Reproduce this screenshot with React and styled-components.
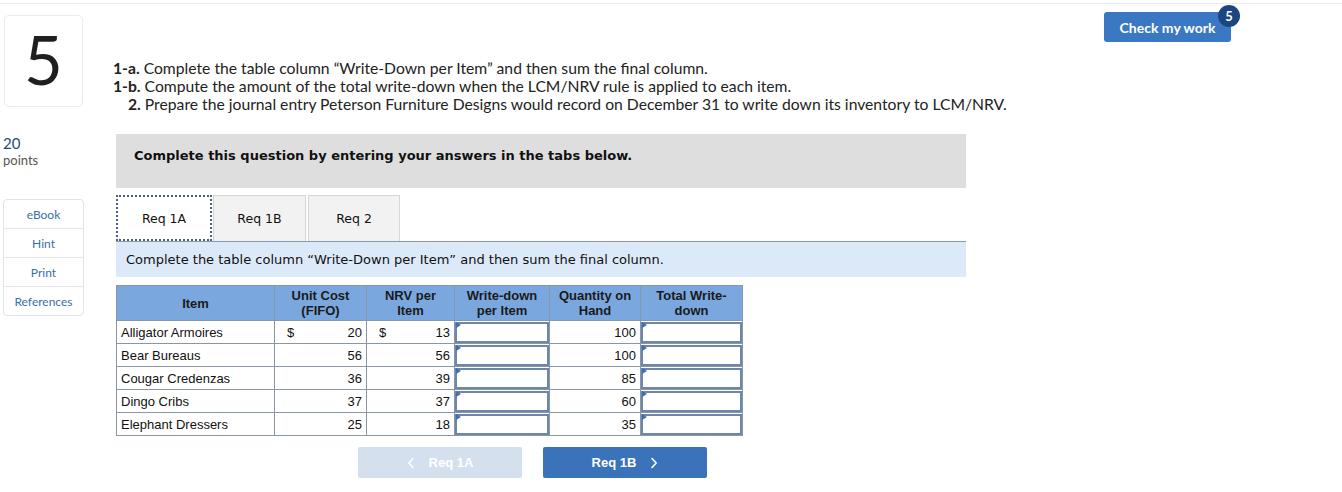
import React from "react";
import styled, { createGlobalStyle } from "styled-components";

const Global = createGlobalStyle`
  html, body { margin: 0; padding: 0; background: #fff; }
  body { font-family: Lato, "Open Sans", sans-serif; color: #222; }
`;

const Page = styled.div`
  border-top: 1px solid #ececec;
  margin-top: 3px;
  display: grid;
  grid-template-columns: 81px 1fr auto;
  column-gap: 29px;
  padding: 0 111px 0 3px;
  min-height: 480px;
  box-sizing: border-box;
`;

const LeftCol = styled.div`
  display: flex;
  flex-direction: column;
`;

const NumberBox = styled.div`
  margin: 11px 0 0 1px;
  width: 79px;
  height: 92px;
  box-sizing: border-box;
  border: 1px solid #ebebeb;
  border-radius: 5px;
  display: flex;
  align-items: center;
  justify-content: center;
  font-size: 67px;
  font-weight: 400;
  color: #1f1f1f;
  line-height: 1;
  padding-bottom: 4px;
`;

const Points = styled.div`
  margin-top: 28px;
  display: flex;
  flex-direction: column;
`;

const PointsValue = styled.span`
  font-size: 15px;
  color: #1d4b80;
  line-height: 17px;
`;

const PointsLabel = styled.span`
  font-size: 13px;
  color: #555;
  line-height: 17px;
`;

const SideMenu = styled.div`
  margin-top: 30px;
  border: 1px solid #e3e3e3;
  border-radius: 4px;
  display: flex;
  flex-direction: column;
`;

const SideItem = styled.div`
  height: 28px;
  display: flex;
  align-items: center;
  justify-content: center;
  font-size: 12px;
  color: #3b6ea8;
  & + & { border-top: 1px solid #e6e6e6; }
`;

const Main = styled.div`
  display: flex;
  flex-direction: column;
`;

const Prompt = styled.div`
  margin-top: 55px;
  font-size: 15.7px;
  line-height: 18px;
  color: #222;
`;

const PromptLine = styled.div`
  padding-left: ${(p) => p.$indent || 0}px;
  b { font-weight: 700; }
`;

const Notice = styled.div`
  margin: 21px 0 0 3px;
  width: 850px;
  height: 54px;
  box-sizing: border-box;
  background: #dedede;
  padding: 14px 0 0 18px;
  font-family: "DejaVu Sans", Verdana, sans-serif;
  font-weight: 700;
  font-size: 13px;
  color: #111;
`;

const TabBar = styled.div`
  margin: 7px 0 0 3px;
  width: 850px;
  display: flex;
  align-items: flex-end;
  border-bottom: 1px solid #8a98aa;
`;

const Tab = styled.div`
  width: ${(p) => p.$w}px;
  height: 46px;
  box-sizing: border-box;
  margin-right: ${(p) => p.$mr || 0}px;
  display: flex;
  align-items: center;
  justify-content: center;
  font-family: "DejaVu Sans", Verdana, sans-serif;
  font-size: 12.5px;
  color: #111;
  background: ${(p) => (p.$active ? "#fff" : "#f2f2f2")};
  border: ${(p) => (p.$active ? "2px dotted #4a5f86" : "1px solid #d6d6d6")};
  border-bottom: ${(p) => (p.$active ? "2px dotted #4a5f86" : "none")};
`;

const InfoBar = styled.div`
  margin-left: 3px;
  width: 850px;
  height: 35px;
  box-sizing: border-box;
  background: #dce9f8;
  padding-left: 10px;
  display: flex;
  align-items: center;
  font-family: "DejaVu Sans", Verdana, sans-serif;
  font-size: 13px;
  color: #111;
`;

const Table = styled.table`
  margin: 8px 0 0 3px;
  width: 626px;
  border-collapse: collapse;
  font-family: "Liberation Sans", Arial, sans-serif;
  font-size: 13px;
  color: #111;
  table-layout: fixed;
`;

const Th = styled.th`
  height: 35px;
  box-sizing: border-box;
  padding: 0 4px;
  background: #7aa8de;
  border: 1px solid #8996a6;
  font-weight: 700;
  line-height: 15px;
  text-align: center;
  vertical-align: middle;
  color: #1a1a1a;
`;

const Td = styled.td`
  height: 23px;
  box-sizing: border-box;
  border: 1px solid #8996a6;
  padding: 0 4px;
  vertical-align: middle;
  text-align: ${(p) => p.$align || "left"};
  line-height: 21px;
`;

const Money = styled.div`
  display: flex;
  justify-content: space-between;
  padding-left: 8px;
`;

const InputTd = styled.td`
  height: 23px;
  box-sizing: border-box;
  border: 1px solid #8996a6;
  padding: 0;
  position: relative;
`;

const InputBox = styled.div`
  height: 21px;
  box-sizing: border-box;
  border: 2px solid #6e87a8;
  background: #fff;
`;

const Flag = styled.span`
  position: absolute;
  top: 1px;
  left: 1px;
  width: 0;
  height: 0;
  border-top: 3px solid transparent;
  border-bottom: 3px solid transparent;
  border-left: 5px solid #3c6fb8;
`;

const NavRow = styled.div`
  margin: 11px 0 0 245px;
  display: flex;
  gap: 21px;
`;

const NavButton = styled.div`
  width: 164px;
  height: 31px;
  border-radius: 2px;
  display: flex;
  align-items: center;
  justify-content: center;
  gap: 14px;
  font-family: "Liberation Sans", Arial, sans-serif;
  font-weight: 700;
  font-size: 13px;
  color: #fff;
  background: ${(p) => (p.$disabled ? "#d5e0ef" : "#3a73b9")};
`;

const ChevronIcon = ({ dir }) => (
  <svg width="8" height="12" viewBox="0 0 8 12" fill="none">
    <path
      d={dir === "left" ? "M6 1.5 L1.8 6 L6 10.5" : "M2 1.5 L6.2 6 L2 10.5"}
      stroke="#fff"
      strokeWidth="1.6"
      strokeLinecap="round"
      strokeLinejoin="round"
    />
  </svg>
);

const RightCol = styled.div`
  padding-top: 8px;
`;

const CheckButton = styled.div`
  position: relative;
  width: 127px;
  height: 30px;
  border-radius: 3px;
  background: #3b78c3;
  color: #fff;
  font-weight: 700;
  font-size: 14px;
  display: flex;
  align-items: center;
  justify-content: center;
`;

const Badge = styled.span`
  position: absolute;
  top: -7px;
  right: -9px;
  width: 22px;
  height: 22px;
  border-radius: 50%;
  background: #1c467f;
  color: #fff;
  font-size: 13px;
  font-weight: 700;
  display: flex;
  align-items: center;
  justify-content: center;
`;

const rows = [
  ["Alligator Armoires", 20, 13, 100, true],
  ["Bear Bureaus", 56, 56, 100],
  ["Cougar Credenzas", 36, 39, 85],
  ["Dingo Cribs", 37, 37, 60],
  ["Elephant Dressers", 25, 18, 35],
];

const InputCell = () => (
  <InputTd>
    <InputBox />
    <Flag />
  </InputTd>
);

export default function App() {
  return (
    <>
      <Global />
      <Page>
        <LeftCol>
          <NumberBox>5</NumberBox>
          <Points>
            <PointsValue>20</PointsValue>
            <PointsLabel>points</PointsLabel>
          </Points>
          <SideMenu>
            <SideItem>eBook</SideItem>
            <SideItem>Hint</SideItem>
            <SideItem>Print</SideItem>
            <SideItem>References</SideItem>
          </SideMenu>
        </LeftCol>
        <Main>
          <Prompt>
            <PromptLine>
              <b>1-a.</b> Complete the table column “Write-Down per Item” and then sum the final column.
            </PromptLine>
            <PromptLine>
              <b>1-b.</b> Compute the amount of the total write-down when the LCM/NRV rule is applied to each item.
            </PromptLine>
            <PromptLine $indent={15}>
              <b>2.</b> Prepare the journal entry Peterson Furniture Designs would record on December 31 to write down its inventory to LCM/NRV.
            </PromptLine>
          </Prompt>
          <Notice>Complete this question by entering your answers in the tabs below.</Notice>
          <TabBar>
            <Tab $w={96} $mr={1} $active>Req 1A</Tab>
            <Tab $w={93} $mr={2}>Req 1B</Tab>
            <Tab $w={92}>Req 2</Tab>
          </TabBar>
          <InfoBar>Complete the table column “Write-Down per Item” and then sum the final column.</InfoBar>
          <Table>
            <colgroup>
              <col style={{ width: 158 }} />
              <col style={{ width: 92 }} />
              <col style={{ width: 88 }} />
              <col style={{ width: 95 }} />
              <col style={{ width: 91 }} />
              <col style={{ width: 102 }} />
            </colgroup>
            <thead>
              <tr>
                <Th>Item</Th>
                <Th>Unit Cost<br />(FIFO)</Th>
                <Th>NRV per<br />Item</Th>
                <Th>Write-down<br />per Item</Th>
                <Th>Quantity on<br />Hand</Th>
                <Th>Total Write-<br />down</Th>
              </tr>
            </thead>
            <tbody>
              {rows.map(([name, cost, nrv, qty, dollar]) => (
                <tr key={name}>
                  <Td>{name}</Td>
                  <Td $align="right">
                    {dollar ? (
                      <Money><span>$</span><span>{cost}</span></Money>
                    ) : cost}
                  </Td>
                  <Td $align="right">
                    {dollar ? (
                      <Money><span>$</span><span>{nrv}</span></Money>
                    ) : nrv}
                  </Td>
                  <InputCell />
                  <Td $align="right">{qty}</Td>
                  <InputCell />
                </tr>
              ))}
            </tbody>
          </Table>
          <NavRow>
            <NavButton $disabled>
              <ChevronIcon dir="left" />
              <span>Req 1A</span>
            </NavButton>
            <NavButton>
              <span>Req 1B</span>
              <ChevronIcon dir="right" />
            </NavButton>
          </NavRow>
        </Main>
        <RightCol>
          <CheckButton>
            Check my work
            <Badge>5</Badge>
          </CheckButton>
        </RightCol>
      </Page>
    </>
  );
}
